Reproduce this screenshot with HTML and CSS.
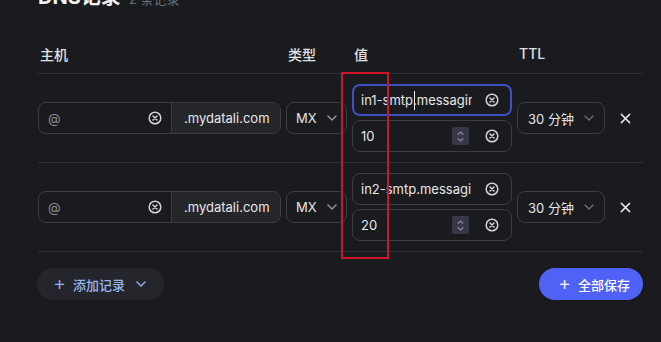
FILE: index.html
```html
<!DOCTYPE html>
<html lang="zh-CN">
<head>
<meta charset="UTF-8" />
<meta name="viewport" content="width=device-width, initial-scale=1.0">
<title>DNS 记录</title>
<link rel="stylesheet" href="styles.css">
</head>
<body>

<div class="page">
  <div class="title">
    <h2>DNS记录</h2>
    <span class="count">2 条记录</span>
  </div>

  <div class="dns-table">
    <div class="dns-row head">
      <div>主机</div>
      <div>类型</div>
      <div>值</div>
      <div>TTL</div>
      <div></div>
    </div>

    <!-- record 1 -->
    <div class="dns-row">
      <div class="host-group">
        <div class="host-input">
          <span class="placeholder">@</span>
          <svg class="clear" viewBox="0 0 14 14"><circle cx="7" cy="7" r="5.8"/><path d="M5 5l4 4M9 5l-4 4"/></svg>
        </div>
        <div class="suffix">.mydatali.com</div>
      </div>
      <div class="select type">MX <svg class="chev" viewBox="0 0 10 6"><path d="M1 1l4 4 4-4"/></svg></div>
      <div class="value-stack">
        <div class="field focused">
          <span class="val">in1-smtp.messaging.mydatali.com</span>
          <span class="caret"></span>
          <svg class="clear" viewBox="0 0 14 14"><circle cx="7" cy="7" r="5.8"/><path d="M5 5l4 4M9 5l-4 4"/></svg>
        </div>
        <div class="field">
          <span class="val">10</span>
          <span class="stepper"><svg viewBox="0 0 10 14"><path d="M2 5l3-3 3 3M2 9l3 3 3-3"/></svg></span>
          <svg class="clear" viewBox="0 0 14 14"><circle cx="7" cy="7" r="5.8"/><path d="M5 5l4 4M9 5l-4 4"/></svg>
        </div>
      </div>
      <div class="select ttl">30 分钟 <svg class="chev dim" viewBox="0 0 10 6"><path d="M1 1l4 4 4-4"/></svg></div>
      <div class="remove"><svg viewBox="0 0 12 12"><path d="M1.5 1.5l9 9M10.5 1.5l-9 9"/></svg></div>
    </div>

    <!-- record 2 -->
    <div class="dns-row">
      <div class="host-group">
        <div class="host-input">
          <span class="placeholder">@</span>
          <svg class="clear" viewBox="0 0 14 14"><circle cx="7" cy="7" r="5.8"/><path d="M5 5l4 4M9 5l-4 4"/></svg>
        </div>
        <div class="suffix">.mydatali.com</div>
      </div>
      <div class="select type">MX <svg class="chev" viewBox="0 0 10 6"><path d="M1 1l4 4 4-4"/></svg></div>
      <div class="value-stack">
        <div class="field">
          <span class="val">in2-smtp.messaging.mydatali.com</span>
          <svg class="clear" viewBox="0 0 14 14"><circle cx="7" cy="7" r="5.8"/><path d="M5 5l4 4M9 5l-4 4"/></svg>
        </div>
        <div class="field">
          <span class="val">20</span>
          <span class="stepper"><svg viewBox="0 0 10 14"><path d="M2 5l3-3 3 3M2 9l3 3 3-3"/></svg></span>
          <svg class="clear" viewBox="0 0 14 14"><circle cx="7" cy="7" r="5.8"/><path d="M5 5l4 4M9 5l-4 4"/></svg>
        </div>
      </div>
      <div class="select ttl">30 分钟 <svg class="chev dim" viewBox="0 0 10 6"><path d="M1 1l4 4 4-4"/></svg></div>
      <div class="remove"><svg viewBox="0 0 12 12"><path d="M1.5 1.5l9 9M10.5 1.5l-9 9"/></svg></div>
    </div>

    <!-- review marker round the value column -->
    <div class="highlight"></div>
  </div>

  <div class="actions">
    <button class="btn-add"><span class="plus">+</span> 添加记录 <svg class="chev" viewBox="0 0 10 6"><path d="M1 1l4 4 4-4"/></svg></button>
    <button class="btn-save"><span class="plus">+</span> 全部保存</button>
  </div>
</div>

</body>
</html>
```

FILE: styles.css
```css
body {
  margin: 0;
  padding: 0;
  background: #1a1b1e;
  color: #e6e6e8;
  font-family: Inter, "Noto Sans CJK SC", sans-serif;
  font-size: 13px;
  overflow: hidden;
}

.page {
  padding: 0 18px 0 38px;
}

.title {
  display: flex;
  align-items: baseline;
  gap: 8px;
  height: 53px;
  margin-top: -19px;
}

.title h2 {
  margin: 0;
  font-size: 20px;
  font-weight: 700;
  color: #f2f2f2;
}

.title .count {
  color: #6c6e74;
  font-size: 13px;
}

.dns-table {
  position: relative;
}

.dns-row {
  display: grid;
  grid-template-columns: 243px 61px 160px 88px 30px;
  column-gap: 5px;
  align-items: center;
  padding: 10px 0;
  border-bottom: 1px solid #2f3034;
}

.dns-row.head {
  height: 40px;
  box-sizing: border-box;
  padding: 0 0 0 2px;
  font-size: 14px;
  font-weight: 500;
  color: #e0e0e2;
}

.host-group {
  display: flex;
  height: 32px;
  border: 1px solid #3c3d42;
  border-radius: 8px;
  box-sizing: border-box;
  overflow: hidden;
}

.host-input {
  width: 132px;
  display: flex;
  align-items: center;
  justify-content: space-between;
  padding: 0 9px 0 9px;
  box-sizing: border-box;
}

.placeholder {
  color: #8b8c91;
}

.suffix {
  flex: 1;
  display: flex;
  align-items: center;
  padding-left: 12px;
  background: #25262a;
  border-left: 1px solid #3c3d42;
  color: #e6e6e8;
}

.clear {
  width: 14px;
  height: 14px;
  flex: none;
  fill: none;
  stroke: #d4d4d8;
  stroke-width: 1.5;
  stroke-linecap: round;
}

.select {
  height: 32px;
  box-sizing: border-box;
  border: 1px solid #3c3d42;
  border-radius: 8px;
  display: flex;
  align-items: center;
  justify-content: space-between;
  padding: 0 9px;
}

.chev {
  width: 10px;
  height: 6px;
  fill: none;
  stroke: #9a9ba0;
  stroke-width: 1.4;
  stroke-linecap: round;
  stroke-linejoin: round;
}

.chev.dim {
  stroke: #6d6e73;
}

.value-stack {
  display: flex;
  flex-direction: column;
  gap: 4px;
}

.field {
  height: 32px;
  box-sizing: border-box;
  border: 1px solid #3c3d42;
  border-radius: 8px;
  display: flex;
  align-items: center;
  padding: 0 12px 0 8px;
  position: relative;
}

.field.focused {
  border: 2px solid #3f4fc4;
  padding: 0 11px 0 7px;
}

.field .val {
  flex: 1;
  white-space: nowrap;
  overflow: hidden;
  margin-right: 14px;
}

.field.focused .val {
  margin-right: 13px;
}

.caret {
  position: absolute;
  left: 60px;
  top: 5px;
  width: 1px;
  height: 19px;
  background: #f0f0f0;
}

.stepper {
  width: 17px;
  height: 18px;
  background: #37374a;
  border-radius: 2px;
  display: flex;
  align-items: center;
  justify-content: center;
  margin-right: 16px;
}

.stepper svg {
  width: 9px;
  height: 13px;
  fill: none;
  stroke: #8d8ea6;
  stroke-width: 1.3;
}

.ttl {
  padding: 0 10px 0 10px;
}

.remove {
  display: flex;
  justify-content: center;
}

.remove svg {
  width: 11px;
  height: 11px;
  stroke: #e4e4e6;
  stroke-width: 1.6;
  stroke-linecap: round;
}

.highlight {
  position: absolute;
  left: 303px;
  top: 38px;
  width: 44px;
  height: 183px;
  border: 2px solid #d0142c;
}

.actions {
  display: flex;
  justify-content: space-between;
  margin-top: 16px;
}

.actions button {
  height: 32px;
  border: none;
  border-radius: 16px;
  font-family: inherit;
  font-size: 13px;
  font-weight: 500;
  display: flex;
  align-items: center;
  gap: 7px;
  cursor: pointer;
}

.plus {
  font-size: 20px;
  font-weight: 300;
  line-height: 1;
  margin-top: -2px;
}

.btn-add {
  margin-left: -1px;
  padding: 0 18px 0 16px;
  background: #25262b;
  color: #98b6ee;
}

.btn-add .chev {
  stroke: #98b6ee;
  margin-left: 4px;
}

.btn-save {
  padding: 0 13px 0 19px;
  background: #5062f5;
  color: #ffffff;
}
```
